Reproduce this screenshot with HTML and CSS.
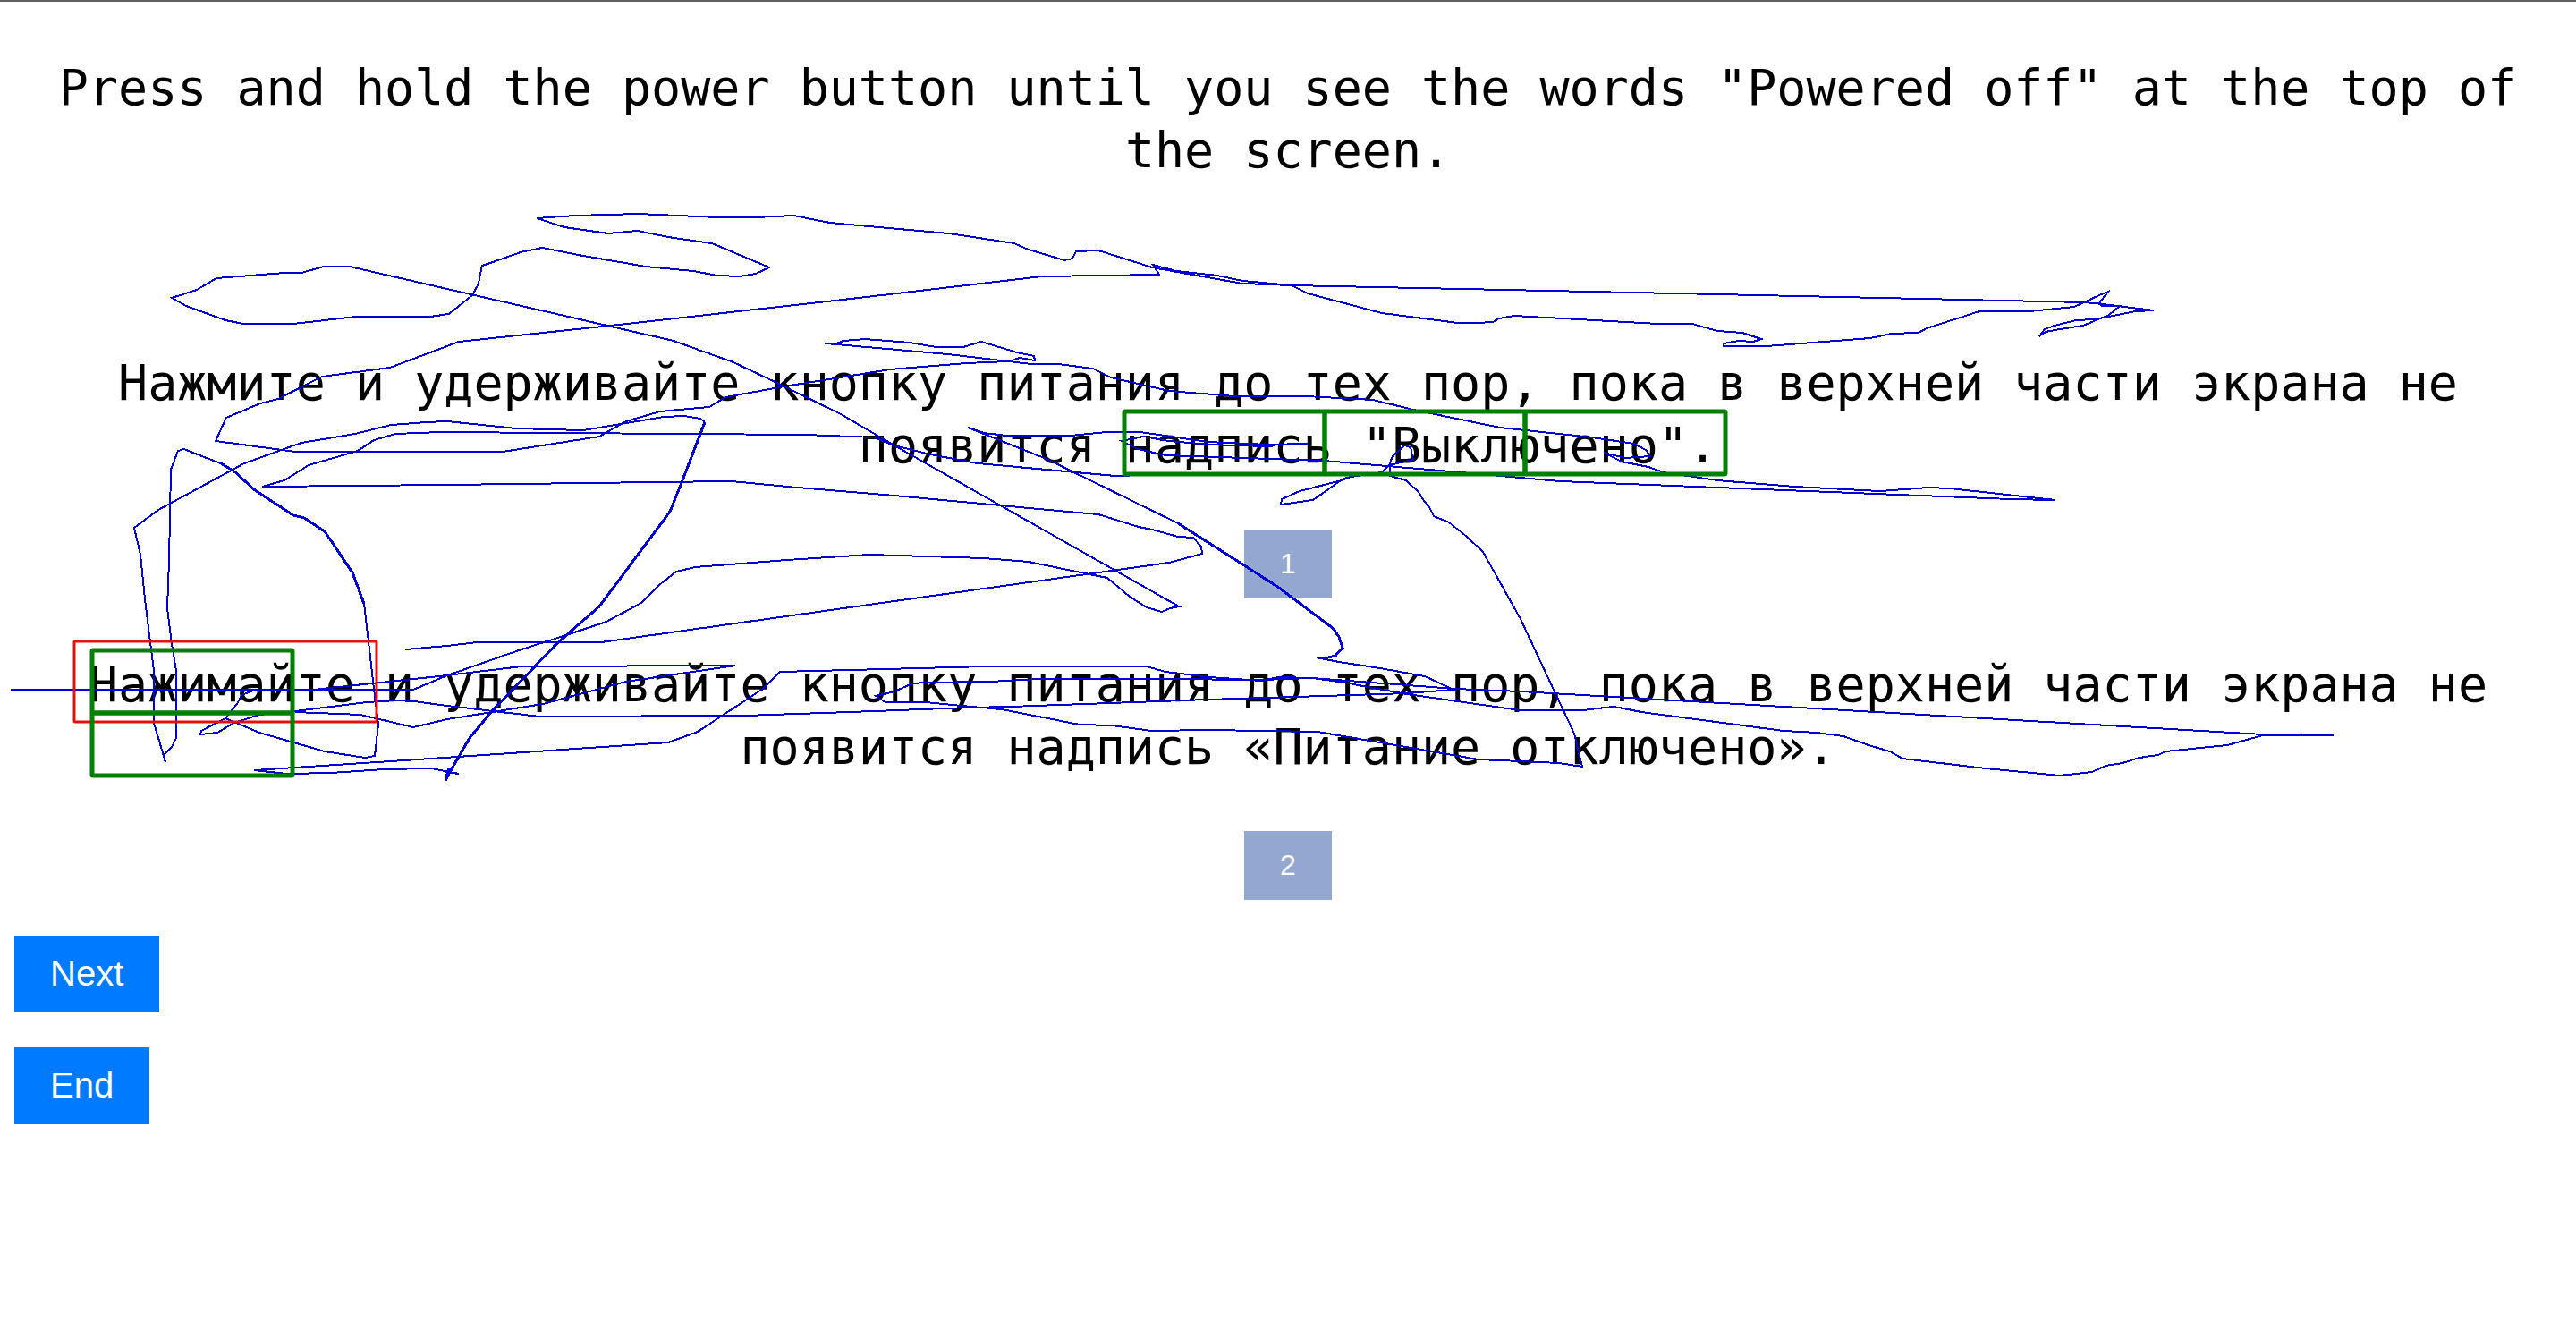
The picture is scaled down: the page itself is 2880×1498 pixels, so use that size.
FILE: index.html
```html
<!DOCTYPE html>
<html lang="en">
<head>
<meta charset="utf-8">
<title>Translation ranking</title>
<link rel="stylesheet" href="styles.css">
</head>
<body>
<main class="page">
  <p class="sentence source">Press and hold the power button until you see the words "Powered off" at the top of the screen.</p>

  <div class="candidates" lang="ru">
    <section class="candidate">
      <p class="sentence">Нажмите и удерживайте кнопку питания до тех пор, пока в верхней части экрана не появится надпись "Выключено".</p>
      <button type="button" class="rank">1</button>
    </section>
    <section class="candidate">
      <p class="sentence">Нажимайте и удерживайте кнопку питания до тех пор, пока в верхней части экрана не появится надпись «Питание отключено».</p>
      <button type="button" class="rank">2</button>
    </section>
  </div>

  <div class="actions">
    <button type="button" class="action">Next</button>
    <button type="button" class="action">End</button>
  </div>
</main>

<!-- Gaze trace and fixated regions, drawn over the text -->
<svg class="gaze" viewBox="0 0 2880 1498" aria-hidden="true">
  <g class="trace">
    <polyline points="453,726 500,722 533,718 672,718 1000,672 1307,629 1344,619 1343,611 1334,601 1317,600 1288,592 1273,589 1228,575 1183,571 1000,554 880,544 818,538 733,539 500,542 293,544 318,537 345,520 400,504 418,492 442,485 493,483 623,484 763,485 900,486 977,489 1000,498 1040,508 1093,518 1247,532 1280,531"/>
    <polyline points="1510,533 1502,535 1468,559 1432,564 1433,558 1453,549 1500,537 1510,533 1545,528 1553,520 1580,514 1577,500 1570,498 1557,510 1554,517 1554,532 1572,537 1586,550 1592,560 1598,567 1603,577 1620,584 1640,600 1658,617 1700,692 1760,820 1769,857 1743,853 1700,851 1653,849 1473,818 1350,816 1288,817 1243,811 1207,810 1120,793 1075,789 1035,785 990,785 979,778 1000,773 1018,765 1030,763 1107,762 1163,759 1300,759 1410,760 1467,758 1497,762 1573,776 1700,794 1770,794 1803,790 1810,791 1835,796 1994,817 2031,819 2061,823 2089,833 2113,840 2127,848 2220,859 2303,867 2339,863 2354,856 2373,853 2392,847 2413,844 2421,840 2490,833 2530,822 2609,822 2530,821 1700,773 1627,770 1467,758 1430,757 1410,761 1353,757 1303,751 1282,745 1103,745 950,749 872,751 853,770 780,818 747,830 467,849 284,861 320,865 370,864 430,860 482,859 513,865 497,863"/>
    <polyline class="heavy" points="788,472 763,537 749,572 670,678 623,719 550,795 525,825 503,863 498,873 502,858"/>
    <polyline points="788,472 783,468 765,465 742,466 700,473 652,481 577,479 500,471 477,472 437,475 397,485 337,495 273,518 177,570 150,590 157,620 162,670 172,750 172,808 185,852 183,844 192,835 197,825 197,750 192,720 187,680 189,627 191,525 199,504 206,502 228,511 247,518"/>
    <polyline class="heavy" points="247,518 262,527 285,548 328,576 340,579 363,594 394,640 407,675"/>
    <polyline points="407,675 412,717 418,770 423,810 419,845 408,847 363,840 290,819 252,803 225,817 224,821 243,819 262,808 290,799 330,795 410,785 443,783 463,784 500,789 543,794 603,801 833,800 950,796 1083,791 1130,790 1350,782 1480,778 1573,775 1625,771 1593,756 1543,747 1497,740 1472,735 1485,735"/>
    <polyline class="heavy" points="1485,735 1493,733 1501,724 1497,712 1490,702 1427,655 1380,625 1317,585"/>
    <polyline points="1317,585 1170,513 1082,478 1100,484 1125,487 1197,487 1237,483 1275,483 1350,494 1417,497 1462,496 1427,497 1422,499 1380,498 1353,497 1307,493 1278,488 1254,493 1272,502 1303,509 1450,514 1480,515 1633,528 1744,538 1920,545 2248,558 2298,559 2180,546 2156,545 2102,549 2006,544 1920,537 1860,528 1843,522 1813,516 1793,506 1817,512 1845,510 1840,503 1827,496 1780,489 1677,478 1580,458 1535,447 1460,443 1380,443 1307,437 1242,422 1222,412 1183,407 1153,407 1060,396 935,385 922,384 935,384 943,381 967,379 1017,383 1047,388 1077,388 1097,382 1137,394 1156,398 1157,403 1140,400 1127,404 1080,406 995,413 877,432 811,444 793,455 738,460 700,471 670,488 562,505 330,505 241,493 253,467 291,451 311,446 360,421 436,411 513,382 683,364 960,333 1165,309 1296,307 1289,296 1315,303 1361,308 1389,314 1444,319 1920,329 2330,338 2342,339 2408,347 2388,348 2342,357 2321,358 2297,364 2286,368 2280,376 2287,371 2303,368 2329,364 2358,352 2370,342 2350,342 2347,339 2357,326 2347,330 2319,343 2269,348 2213,348 2154,367 2145,372 2114,373 2091,378 1975,387 1927,387 1927,384 1944,381 1960,382 1969,379 1948,372 1920,370 1892,362 1854,362 1693,353 1676,356 1669,360 1651,361 1630,361 1545,350 1462,328 1444,319 1389,317 1333,307 1288,299 1228,280 1203,281 1199,289 1190,291 1147,278 1134,272 1061,261 960,252 928,249 887,241 845,243 802,243 714,239 643,241 600,244 631,254 680,261 712,258 753,266 796,272 860,299 845,306 827,309 802,308 775,303 722,298 652,286 606,277 582,282 551,293 539,297 535,317 528,330 502,351 481,354 398,354 328,362 272,362 252,358 208,342 192,333 220,324 242,311 318,305 337,305 362,298 391,298 753,381 820,405 877,432 940,463 1007,502 1318,678 1308,680 1299,684 1282,679 1263,667 1238,646 1213,641 1150,628 1100,624 972,620 880,626 777,634 756,639 737,654 717,674 678,695 633,710 580,727 500,755 462,771 12,771"/>
    <polyline points="500,755 583,745 822,744 700,762 607,787 500,804 462,813 403,799 330,796"/>
    <polyline points="500,755 350,771 283,772 270,777 265,787 252,803"/>
  </g>
  <rect class="word" x="83" y="717" width="338" height="90" rx="1"/>
  <g class="region">
    <rect x="103" y="727" width="224" height="70" rx="1"/>
    <rect x="103" y="797" width="224" height="70" rx="1"/>
    <rect x="1257" y="460" width="224" height="70" rx="1"/>
    <rect x="1481" y="460" width="224" height="70" rx="1"/>
    <rect x="1705" y="460" width="224" height="70" rx="1"/>
  </g>
</svg>
</body>
</html>
```
FILE: styles.css
```css
* {
  box-sizing: border-box;
}

body {
  position: relative;
  margin: 0;
  border-top: 2px solid #606060;
  background: #fff;
  color: #000;
  font-family: "Liberation Sans", Arial, sans-serif;
}

.page {
  padding: 61px 16px 40px;
}

.sentence {
  margin: 0;
  font-family: "DejaVu Sans Mono", monospace;
  font-size: 55px;
  line-height: 70px;
  text-align: center;
}

.source {
  margin-bottom: 190px;
}

.candidates {
  display: flex;
  flex-direction: column;
  gap: 61px;
}

.candidate {
  display: flex;
  flex-direction: column;
  align-items: center;
  gap: 59px;
}

.rank,
.action {
  border: 0;
  padding: 20px 40px;
  color: #fff;
  font-family: inherit;
  cursor: pointer;
}

.rank {
  background: #93a7d0;
  font-size: 32px;
  line-height: 37px;
}

.actions {
  display: flex;
  flex-direction: column;
  align-items: flex-start;
  gap: 40px;
  margin-top: 40px;
}

.action {
  background: #007bff;
  font-size: 40px;
  line-height: 45px;
}

.gaze {
  position: absolute;
  top: -2px;
  left: 0;
  width: 100%;
  pointer-events: none;
  fill: none;
}

.trace {
  stroke: #0000d4;
  stroke-width: 2;
  shape-rendering: crispEdges;
}

.heavy {
  stroke-width: 3;
}

.word {
  stroke: #e31010;
  stroke-width: 3;
}

.region {
  stroke: #008000;
  stroke-width: 5;
}
```
